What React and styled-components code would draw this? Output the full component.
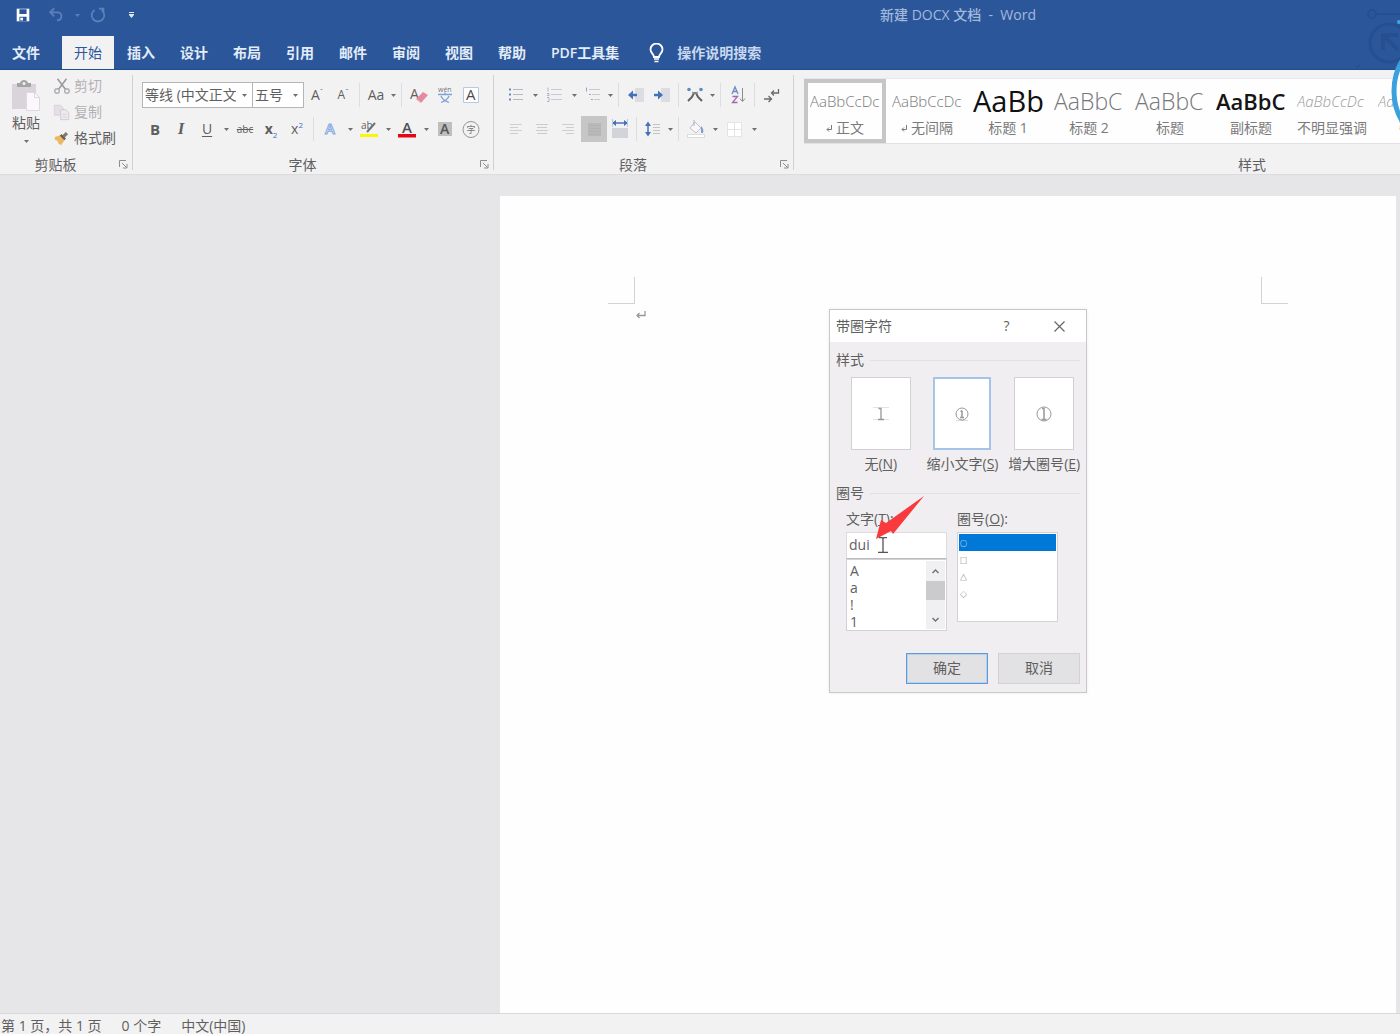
import React, { useState } from "react";
import styled, { createGlobalStyle } from "styled-components";

const wordBlue = "#2b579a";
const ribbonGrey = "#f3f2f3";
const textGrey = "#5f5f61";
const accent = "#4472b8";

const GlobalStyle = createGlobalStyle`
  * {
    box-sizing: border-box;
  }
  body {
    margin: 0;
    overflow: hidden;
    font-family: "Open Sans", "Noto Sans CJK SC", sans-serif;
    font-size: 14px;
    line-height: 20px;
    color: ${textGrey};
  }
  button, input, select {
    font: inherit;
    color: inherit;
    margin: 0;
  }
  button {
    padding: 0;
    border: 0;
    background: none;
    cursor: pointer;
  }
`;

const AppStyled = styled.div`
  position: relative;
  display: flex;
  flex-direction: column;
  min-height: 100vh;
  overflow: hidden;
  background-color: #e6e6e8;
`;

/* ---------- header ---------- */

const Header = styled.header`
  background-color: ${wordBlue};
  border-bottom: 1px solid #1d4f8f;
`;

const TitleBar = styled.div`
  display: flex;
  align-items: center;
  justify-content: space-between;
  height: 30px;
  padding: 0 26% 0 12px;
`;

const QuickAccess = styled.div`
  display: flex;
  align-items: center;
  gap: 11px;
`;

const QuickButton = styled.button`
  display: flex;
  align-items: center;
  justify-content: center;
  width: ${props => (props.$small ? "8px" : "22px")};
  height: 22px;
  margin: ${props => (props.$small ? "0 -5px" : "0")};
  color: ${props => (props.$off ? "#5c80b9" : "#ffffff")};
`;

const Title = styled.div`
  color: #a3b9dc;
  font-weight: 500;
  white-space: pre;
`;

const Tabs = styled.nav`
  display: flex;
  align-items: stretch;
  gap: 1px;
  height: 39px;
  padding-top: 6px;
`;

const Tab = styled.button`
  padding: 0 12px;
  margin-right: ${props => (props.$file ? "9px" : "0")};
  font-weight: ${props => (props.$active ? 400 : 600)};
  color: ${props => (props.$active ? wordBlue : "#e4ecf8")};
  background-color: ${props => (props.$active ? ribbonGrey : "transparent")};
  white-space: nowrap;
`;

const TellMe = styled.button`
  display: flex;
  align-items: center;
  gap: 13px;
  margin-left: 17px;
  font-weight: 600;
  color: #c9d8ee;
`;

/* ---------- ribbon ---------- */

const Ribbon = styled.section`
  display: flex;
  height: 105px;
  background-color: ${ribbonGrey};
  border-bottom: 1px solid #dcdcde;
`;

const Group = styled.div`
  position: relative;
  display: flex;
  flex-direction: column;
  flex: none;
  padding: 12px 8px 0 9px;
  min-width: ${props => props.$min || "0"};

  &:not(:last-child)::after {
    content: "";
    position: absolute;
    top: 5px;
    right: 0;
    bottom: 4px;
    width: 1px;
    background-color: #cfd1d6;
  }
`;

const GroupFooter = styled.div`
  display: flex;
  align-items: center;
  margin: auto -4px 0 -9px;
  height: 19px;
`;

const GroupName = styled.div`
  flex: 1;
  padding-right: ${props => (props.$last ? "0" : "8px")};
  text-align: center;
`;

const Launcher = styled.button`
  display: flex;
  width: 10px;
`;

const ToolRows = styled.div`
  display: flex;
  flex-direction: column;
  gap: 8px;
`;

const ToolRow = styled.div`
  display: flex;
  align-items: center;
  height: 26px;
`;

const Tool = styled.button`
  display: flex;
  align-items: center;
  justify-content: center;
  width: ${props => (props.$narrow ? "24px" : "26px")};
  height: 26px;
  background-color: ${props => (props.$on ? "#c6c6c6" : "transparent")};
`;

const CaretButton = styled.button`
  display: flex;
  align-items: center;
  justify-content: center;
  width: ${props => (props.$narrow ? "10px" : props.$wide ? "14px" : "12px")};
  height: 26px;
`;

const Separator = styled.span`
  width: 1px;
  height: 24px;
  margin: 0 4px 0 3px;
  background-color: #dcdde1;
`;

const Letter = styled.span`
  font-size: ${props => props.$size || 15}px;
  font-weight: ${props => (props.$bold ? 700 : 400)};
  font-style: ${props => (props.$italic ? "italic" : "normal")};
  font-family: ${props =>
    props.$serif ? '"Liberation Serif", serif' : "inherit"};
  text-decoration: ${props => props.$line || "none"};
  text-underline-offset: 2px;

  sub, sup {
    font-size: 8px;
    font-weight: 400;
    line-height: 0;
    color: ${accent};
  }
`;

const Combo = styled.label`
  display: flex;
  align-items: center;
  justify-content: space-between;
  gap: 6px;
  width: ${props => (props.$short ? "52px" : "111px")};
  height: 26px;
  margin-right: ${props => (props.$short ? "0" : "-1px")};
  padding: 0 5px 0 2px;
  background-color: #ffffff;
  border: 1px solid #b5b5b7;
`;

const ComboSelect = styled.select`
  appearance: none;
  flex: 1;
  min-width: 0;
  height: 24px;
  padding: 0;
  border: 0;
  background: none;
  overflow: hidden;
  text-overflow: clip;
`;

const ClipboardBody = styled.div`
  display: flex;
  gap: 7px;
  margin: -2px 0 0 -3px;
`;

const PasteButton = styled.button`
  display: flex;
  flex-direction: column;
  align-items: center;
  width: 40px;
  line-height: 22px;

  svg:last-child {
    margin-top: 6px;
  }
`;

const ClipboardList = styled.div`
  display: flex;
  flex-direction: column;
  gap: 6px;
  margin-top: -4px;
`;

const ClipboardItem = styled.button`
  display: flex;
  align-items: center;
  gap: 3px;
  height: 20px;
  color: ${props => (props.$off ? "#b3b1b5" : textGrey)};
`;

const Gallery = styled.div`
  display: flex;
  height: 66px;
  margin: -4px 0 0 1px;
  background-color: #fefefe;
  border-top: 1px solid #e4e6ee;
  border-bottom: 1px solid #e2e2e4;
`;

const StyleCard = styled.button`
  display: flex;
  flex-direction: column;
  align-items: center;
  flex: none;
  width: 82px;
  padding: ${props => (props.$active ? "1px 0 0" : "5px 4px 0")};
  border: ${props => (props.$active ? "4px solid #c6c6c6" : "0")};

  & + & {
    margin-right: -1px;
  }
`;

const Preview = styled.span`
  width: 70px;
  height: 34px;
  line-height: 34px;
  overflow: hidden;
  white-space: nowrap;
  text-align: left;
  font-size: ${props => props.$size}px;
  font-weight: ${props => props.$weight || 300};
  font-style: ${props => (props.$italic ? "italic" : "normal")};
  color: ${props => props.$color || "#77777a"};
`;

const StyleName = styled.span`
  display: flex;
  align-items: center;
  gap: 4px;
  color: #7a7a7c;
  white-space: nowrap;
`;

/* ---------- document ---------- */

const Workspace = styled.main`
  flex: 1;
  display: flex;
  justify-content: flex-end;
  padding-top: 21px;
`;

const Paper = styled.article`
  position: relative;
  width: 64%;
  margin-right: 4px;
  padding: 81px 108px 0;
  background-color: #fefefe;
`;

const Margins = styled.div`
  display: flex;
  justify-content: space-between;
`;

const Corner = styled.span`
  width: 27px;
  height: 27px;
  border-bottom: 1px solid #d4d4d6;
  border-left: ${props => (props.$right ? "1px solid #d4d4d6" : "0")};
  border-right: ${props => (props.$right ? "0" : "1px solid #d4d4d6")};
`;

const Paragraph = styled.p`
  display: flex;
  margin: 6px 0 0 27px;
`;

/* ---------- dialog ---------- */

const Dialog = styled.section`
  position: absolute;
  top: 113px;
  left: 329px;
  width: 258px;
  background-color: #f0eef0;
  border: 1px solid #c9c7ca;
  box-shadow: 0 0 3px rgba(0, 0, 0, 0.08);
`;

const DialogTitle = styled.div`
  display: flex;
  align-items: center;
  height: 32px;
  padding-left: 6px;
  background-color: #ffffff;
`;

const DialogName = styled.h1`
  flex: 1;
  margin: 0;
  font-size: 14px;
  font-weight: 400;
`;

const DialogTool = styled.button`
  display: flex;
  align-items: center;
  justify-content: center;
  width: 53px;
  height: 32px;
`;

const DialogBody = styled.div`
  padding: 8px 6px;
`;

const SectionTitle = styled.div`
  display: flex;
  align-items: center;
  gap: 6px;

  &::after {
    content: "";
    flex: 1;
    height: 1px;
    background-color: #e2e0e3;
  }
`;

const Choices = styled.div`
  display: grid;
  grid-template-columns: repeat(3, 1fr);
  margin: 7px -5px 9px 4px;
`;

const Choice = styled.label`
  display: flex;
  flex-direction: column;
  align-items: center;
  gap: 4px;
  white-space: nowrap;

  input {
    appearance: none;
    position: absolute;
    margin: 0;
  }
`;

const ChoiceBox = styled.span`
  display: flex;
  align-items: center;
  justify-content: center;
  width: ${props => (props.$on ? "58px" : "60px")};
  height: 73px;
  background-color: #ffffff;
  border: ${props => (props.$on ? "2px solid #a4c4ea" : "1px solid #d2d0d3")};
`;

const Columns = styled.div`
  display: flex;
  gap: 10px;
  padding: 6px 10px 0;
`;

const Field = styled.div`
  display: flex;
  flex-direction: column;
  width: 101px;

  & > label {
    height: 23px;
  }
`;

const TextInput = styled.input`
  width: 100%;
  height: 27px;
  padding: 0 2px 2px;
  background-color: #ffffff;
  border: 1px solid #dddbde;
  border-bottom-color: #bcbabd;
  outline: none;
`;

const ListFrame = styled.div`
  display: flex;
  height: ${props => (props.$tall ? "90px" : "72px")};
  padding: 1px;
  background-color: #ffffff;
  border: 1px solid #cfd3d8;
`;

const ListBox = styled.select`
  flex: 1;
  min-width: 0;
  height: 100%;
  padding: 0;
  border: 0;
  border-radius: 0;
  background: none;
  overflow: hidden;
  outline: none;

  option {
    height: 17px;
    min-height: 17px;
    padding: ${props => (props.$symbols ? "4px 1px 0" : "0 2px")};
    border-radius: 0;
    font-size: ${props => (props.$symbols ? "7px" : "14px")};
    font-weight: ${props => (props.$symbols ? "700" : "400")};
    line-height: 17px;
    color: ${textGrey};
  }
  option:checked {
    color: ${props => (props.$symbols ? "#ffffff" : textGrey)};
    background: ${props =>
      props.$symbols ? "linear-gradient(#0078d7, #0078d7)" : "none"};
  }
`;

const ScrollTrack = styled.div`
  display: flex;
  flex-direction: column;
  width: 19px;
  background-color: #f0eff1;
`;

const ScrollButton = styled.button`
  display: flex;
  align-items: center;
  justify-content: center;
  height: 20px;
`;

const ScrollThumb = styled.span`
  height: 19px;
  margin-bottom: auto;
  background-color: #cbcacc;
`;

const DialogFooter = styled.div`
  display: flex;
  justify-content: flex-end;
  gap: 10px;
  margin-top: 22px;
`;

const DialogButton = styled.button`
  width: 82px;
  height: 31px;
  padding-bottom: 2px;
  background-color: #e2e1e3;
  border: 1px solid ${props => (props.$primary ? "#5f9bd5" : "#d2d1d3")};
  box-shadow: ${props => (props.$primary ? "inset 0 0 0 1px #b4d2ee" : "none")};
`;

const Pointer = styled.svg`
  position: absolute;
  left: 375px;
  top: 298px;
`;

const Beam = styled.svg`
  position: absolute;
  left: 378px;
  top: 341px;
`;

/* ---------- status bar ---------- */

const StatusBar = styled.footer`
  display: flex;
  gap: 20px;
  height: 21px;
  padding: 2px 1px 0;
  background-color: ${ribbonGrey};
  border-top: 1px solid #d9d9db;
`;

const Watermark = styled.svg`
  position: absolute;
  top: 0;
  right: 0;
  pointer-events: none;
`;

/* ---------- icons ---------- */

const IconSvg = styled.svg`
  overflow: visible;
`;

function Icon({ size = 20, children }) {
  return (
    <IconSvg width={size} height={size} viewBox="0 0 20 20" fill="none" aria-hidden="true">
      {children}
    </IconSvg>
  );
}

function Caret({ color = "#707072" }) {
  return (
    <svg width="5" height="3" viewBox="0 0 5 3" aria-hidden="true">
      <path d="M0 0h5L2.5 3z" fill={color} />
    </svg>
  );
}

const lines = (rows, color = "#b5b9c4") =>
  rows.map(([x1, x2, y]) => (
    <path key={y} d={`M${x1} ${y}H${x2}`} stroke={color} />
  ));

const icons = {
  save: (
    <Icon size={18}>
      <path d="M3 3h14v14H3z" fill="#fff" />
      <path d="M6 3.500h8V9H6zM6 12h8v5H6z" fill={wordBlue} />
      <path d="M7 13h3v3H7z" fill="#fff" />
    </Icon>
  ),
  undo: (
    <Icon size={18}>
      <path d="M4 7h8c6 0 5 9-1 9M8 2.500L3.500 7l4.500 4.500" stroke="currentColor" strokeWidth="2" />
    </Icon>
  ),
  redo: (
    <Icon size={18}>
      <path d="M6 4.500a7 7 0 1 0 8 0M11 3h5v5" stroke="currentColor" strokeWidth="2" />
    </Icon>
  ),
  more: (
    <svg width="5" height="6" viewBox="0 0 5 6" aria-hidden="true">
      <path d="M0 0h5v1H0zM0 2h5v1L2.500 6 0 3z" fill="#dce8f8" />
    </svg>
  ),
  bulb: (
    <svg width="15" height="20" viewBox="0 0 15 20" fill="none" aria-hidden="true">
      <path d="M5 14c0-3-3.500-4-3.500-7.500a6 6 0 0 1 12 0C13.500 10 10 11 10 14z" stroke="#fff" strokeWidth="1.800" />
      <path d="M5 16h5M5.500 18.500h4" stroke="#fff" strokeWidth="1.600" />
    </svg>
  ),
  paste: (
    <svg width="30" height="32" viewBox="0 0 30 32" fill="none" aria-hidden="true">
      <path d="M1 4h24v25H1z" fill="#d9d4da" />
      <path d="M6 3h3c1-4 7-4 8 0h3v4H6z" fill="#a5a3a6" />
      <circle cx="13" cy="3.500" r="1.500" fill="#f3f2f3" />
      <path d="M15.500 12.500h8l5 5v13h-13z" fill="#fbf7fb" stroke="#e0d8e1" />
      <path d="M23.500 12.500v5h5" stroke="#ddd6de" />
    </svg>
  ),
  cut: (
    <Icon size={18}>
      <path d="M5 2l9 12M15 2L6 14" stroke="#9c9a9e" strokeWidth="1.800" />
      <circle cx="4.500" cy="15.500" r="2.500" stroke="#b0aeb3" strokeWidth="1.600" />
      <circle cx="15.500" cy="15.500" r="2.500" stroke="#b0aeb3" strokeWidth="1.600" />
    </Icon>
  ),
  copy: (
    <Icon size={18}>
      <path d="M1.500 2.500h7l3 3v8h-10z" fill="#e4dfe5" stroke="#d6d1d8" />
      <path d="M8.500 7.500h6l3 3v8h-9z" fill="#efeaf0" stroke="#cfc9d1" />
      <path d="M10.500 12.500h5M10.500 15.500h5" stroke="#d6d1d8" />
    </Icon>
  ),
  brush: (
    <Icon size={18}>
      <path d="M2 9l6-2 5 5-4 6-3-2-1-3-3-1z" fill="#edb95f" />
      <path d="M8.500 6.500l5 5" stroke="#6b5a50" strokeWidth="2.500" />
      <path d="M11.500 8.500L15.500 4.500" stroke="#77777c" strokeWidth="3.500" />
    </Icon>
  ),
  eraser: (
    <Icon>
      <text x="1" y="14" fontSize="14" fill="#606062">A</text>
      <path d="M7 14l7-7 5 3-7 8z" fill="#e58ba0" />
      <path d="M7 14l5 4" stroke="#f4c4cf" />
    </Icon>
  ),
  pinyin: (
    <Icon>
      <text x="3" y="7" fontSize="7" fill="#77777a">wén</text>
      <path d="M3 9.500h14M10 7.500v2M6 11c1 3 4 5 8 6.500M14 11c-1 3-4 5-8 6.500" stroke="#7ea3d6" strokeWidth="1.300" />
    </Icon>
  ),
  boxedA: (
    <Icon>
      <path d="M2.500 2.500h15v15h-15z" fill="#fff" stroke="#b9c9e4" />
      <text x="5" y="15" fontSize="15" fill="#4b4b4d">A</text>
    </Icon>
  ),
  outlineA: (
    <Icon>
      <text x="4" y="15" fontSize="15" fontWeight="600" fill="#e8f0fb" stroke="#86abdf">A</text>
    </Icon>
  ),
  highlight: (
    <Icon>
      <text x="2" y="10" fontSize="10" fill="#606062">ab</text>
      <path d="M8 13l8-9" stroke="#707072" strokeWidth="2" />
      <path d="M1 15h18v3H1z" fill="#fbf605" />
    </Icon>
  ),
  fontColor: (
    <Icon>
      <text x="5" y="14" fontSize="15" fontWeight="600" fill="#4d5058">A</text>
      <path d="M1 15h18v3.500H1z" fill="#e30613" />
    </Icon>
  ),
  shadeA: (
    <Icon>
      <path d="M3 3h14v14H3z" fill="#bfbfc0" />
      <text x="5" y="15" fontSize="14" fontWeight="600" fill="#555557">A</text>
    </Icon>
  ),
  circled: (
    <Icon>
      <circle cx="10" cy="10.500" r="8" stroke="#949496" />
      <text x="5.500" y="14" fontSize="9" fill="#77777a">字</text>
    </Icon>
  ),
  bullets: (
    <Icon>
      {lines([[7, 17, 4.5], [7, 17, 9.5], [7, 17, 14.5]])}
      <path d="M3 3.500h2v2H3zM3 8.500h2v2H3zM3 13.500h2v2H3z" fill="#7088bd" />
    </Icon>
  ),
  numbers: (
    <Icon>
      {lines([[7, 18, 4.5], [7, 18, 9.5], [7, 18, 14.5]], "#c9cad0")}
      <path d="M4 2.500v4M3 8.500h2v2H3M3 12.500h2v4H3" stroke="#aab4d2" />
    </Icon>
  ),
  levels: (
    <Icon>
      {lines([[6, 17, 4.5], [9, 17, 9.5], [11, 17, 14.5]], "#c9cad0")}
      <path d="M3.500 2.500v4M6 9.500h2M8 14.500h2" stroke="#93a1c8" />
    </Icon>
  ),
  outdent: (
    <Icon>
      <path d="M9 3h9v14H9z" fill="#dcdde3" />
      <path d="M4 10h7" stroke={accent} strokeWidth="2.500" />
      <path d="M7 5.500v9L2 10z" fill={accent} />
    </Icon>
  ),
  indent: (
    <Icon>
      <path d="M9 3h9v14H9z" fill="#dcdde3" />
      <path d="M2 10h6" stroke={accent} strokeWidth="2.500" />
      <path d="M6 5.500v9l5-4.500z" fill={accent} />
    </Icon>
  ),
  asian: (
    <Icon>
      <path d="M3 16l4-4 2-4h2l2 4 4 4" stroke="#606062" strokeWidth="2" />
      <circle cx="4" cy="4.500" r="1.800" fill="#5a8ac8" />
      <circle cx="16" cy="4.500" r="1.800" fill="#5a8ac8" />
      <path d="M7 7l6 2M13 7l-6 2" stroke="#8a8a8c" />
    </Icon>
  ),
  sort: (
    <Icon>
      <path d="M4 9l3-7 3 7M5 6.500h4" stroke="#6c8ac4" strokeWidth="1.300" />
      <path d="M4.500 11.500h5l-5 6h5" stroke="#a06ab0" strokeWidth="1.300" />
      <path d="M14.500 3v13M12 13.500l2.500 3 2.500-3" stroke="#8a8a90" />
    </Icon>
  ),
  marks: (
    <Icon>
      <path d="M17.500 4v4H11M13 5.500L10.500 8l2.500 2.500M3 14h7M7.500 11l3 3-3 3" stroke="#6a6a6c" strokeWidth="1.300" />
    </Icon>
  ),
  left: (
    <Icon>{lines([[4, 16, 5.5], [4, 12, 8.5], [4, 16, 11.5], [4, 12, 14.5]], "#cfcfd1")}</Icon>
  ),
  center: (
    <Icon>{lines([[4, 16, 5.5], [5, 15, 8.5], [4, 16, 11.5], [5, 15, 14.5]], "#cbcbcd")}</Icon>
  ),
  right: (
    <Icon>{lines([[4, 16, 5.5], [8, 16, 8.5], [4, 16, 11.5], [8, 16, 14.5]], "#cfcfd1")}</Icon>
  ),
  justify: (
    <Icon>
      <path d="M4 4h13v13H4z" fill="#b9b9ba" />
      {lines([[4, 17, 6.5], [4, 17, 9.5], [4, 17, 12.5], [4, 17, 15.5]], "#b3b3b4")}
    </Icon>
  ),
  distribute: (
    <Icon>
      <path d="M2 9h16v10H2z" fill="#d3d4d9" />
      <path d="M3 4h14" stroke={accent} strokeWidth="1.500" />
      <path d="M6 1v6L2 4zM14 1v6l4-3z" fill={accent} />
      <path d="M2.500 0v8M17.500 0v8" stroke="#b8c8e2" />
    </Icon>
  ),
  spacing: (
    <Icon>
      <path d="M5 4v12" stroke={accent} strokeWidth="1.500" />
      <path d="M2 7h6L5 2.500zM2 13h6l-3 4.500z" fill={accent} />
      {lines([[10, 17, 5.5], [10, 17, 8.5], [10, 17, 11.5], [10, 17, 14.5]], "#c4c4c8")}
    </Icon>
  ),
  fill: (
    <Icon>
      <path d="M4 9l5-6 6 6-5 5z" fill="#f8f8fa" stroke="#c0c0c4" />
      <path d="M8 1v6" stroke="#b0b0b4" />
      <path d="M15 7c2 2 3 4 2 7h-2z" fill="#7c9fd2" />
      <path d="M1.500 15.500h17v3h-17z" fill="#fff" stroke="#dcdce0" />
    </Icon>
  ),
  borders: (
    <Icon>
      <path d="M3.500 3.500h14v14h-14zM10.500 3.500v14M3.500 10.500h14" fill="#fff" stroke="#e4e4e7" />
    </Icon>
  ),
  launcher: (
    <svg width="9" height="9" viewBox="0 0 9 9" fill="none" aria-hidden="true">
      <path d="M.5 7V.5H7M3 3l4.500 4.500M8 4v4H4" stroke="#8e8e90" />
    </svg>
  ),
  enter: (
    <svg width="11" height="10" viewBox="0 0 11 10" fill="none" aria-hidden="true">
      <path d="M10 1v4.500H2M4.500 3L2 5.500 4.500 8" stroke="#98989a" strokeWidth="1.300" />
    </svg>
  ),
  smallEnter: (
    <svg width="6" height="8" viewBox="0 0 6 8" fill="none" aria-hidden="true">
      <path d="M5.500 1v4.500H1M3 3.500l-2 2 2 2" stroke="#7a7a7c" />
    </svg>
  )
};

/* ---------- data ---------- */

const tabNames = ["插入", "设计", "布局", "引用", "邮件", "审阅", "视图", "帮助", "PDF工具集"];

const styleCards = [
  { name: "正文", sample: "AaBbCcDc", size: 15, active: true, enter: true },
  { name: "无间隔", sample: "AaBbCcDc", size: 15, enter: true },
  { name: "标题 1", sample: "AaBb", size: 29, weight: 500, color: "#111111" },
  { name: "标题 2", sample: "AaBbC", size: 23 },
  { name: "标题", sample: "AaBbC", size: 23 },
  { name: "副标题", sample: "AaBbC", size: 22, weight: 600, color: "#151515" },
  { name: "不明显强调", sample: "AaBbCcDc", size: 15, italic: true, color: "#9b9b9d" },
  { name: "强调", sample: "AaBbCcDc", size: 15, italic: true, color: "#9b9b9d" }
];

const choices = [
  { name: "无", hotkey: "N" },
  { name: "缩小文字", hotkey: "S" },
  { name: "增大圈号", hotkey: "E" }
];

function ChoiceGlyph({ kind }) {
  return (
    <svg width="18" height="18" viewBox="0 0 18 18" fill="none" stroke="#98989a" aria-hidden="true">
      {kind === 0 && (
        <>
          <path d="M1 2.500h16M1 14.500h16" stroke="#e2e2e4" />
          <path d="M9 3v11M6 14.500h6M6.500 3.500H9" strokeWidth="1.300" />
        </>
      )}
      {kind === 1 && (
        <>
          <path d="M3 15.500h12" stroke="#dcdcde" />
          <circle cx="9" cy="9" r="6" />
          <path d="M9 5.500v7M7 12.500h4M7.500 6.500L9 5.500" strokeWidth="1.500" />
        </>
      )}
      {kind === 2 && (
        <>
          <circle cx="9" cy="9" r="7" />
          <path d="M9 3v12M6.500 14.500h5M7 3.500h2" strokeWidth="1.500" />
        </>
      )}
    </svg>
  );
}

function IconTool({ name, label, ...rest }) {
  return (
    <Tool aria-label={label} {...rest}>
      {icons[name]}
    </Tool>
  );
}

function DropTool({ name, label, narrow, wide, children }) {
  return (
    <>
      <Tool aria-label={label} $narrow={narrow}>
        {children || icons[name]}
      </Tool>
      <CaretButton aria-label={label + "选项"} $narrow={narrow} $wide={wide}>
        <Caret />
      </CaretButton>
    </>
  );
}

function Footer({ name }) {
  return (
    <GroupFooter>
      <GroupName>{name}</GroupName>
      <Launcher aria-label={name + "设置"}>{icons.launcher}</Launcher>
    </GroupFooter>
  );
}

function ClipboardGroup() {
  return (
    <Group $min="133px">
      <ClipboardBody>
        <PasteButton>
          {icons.paste}
          粘贴
          <Caret />
        </PasteButton>
        <ClipboardList>
          <ClipboardItem $off>{icons.cut}剪切</ClipboardItem>
          <ClipboardItem $off>{icons.copy}复制</ClipboardItem>
          <ClipboardItem>{icons.brush}格式刷</ClipboardItem>
        </ClipboardList>
      </ClipboardBody>
      <Footer name="剪贴板" />
    </Group>
  );
}

function FontGroup() {
  return (
    <Group $min="361px">
      <ToolRows>
        <ToolRow>
          <Combo>
            <ComboSelect aria-label="字体">
              <option>等线 (中文正文)</option>
            </ComboSelect>
            <Caret />
          </Combo>
          <Combo $short>
            <ComboSelect aria-label="字号">
              <option>五号</option>
            </ComboSelect>
            <Caret />
          </Combo>
          <Tool aria-label="增大字号"><Letter $size={14}>A<sup>ˆ</sup></Letter></Tool>
          <Tool aria-label="减小字号"><Letter $size={12}>A<sup>ˇ</sup></Letter></Tool>
          <Separator />
          <DropTool label="更改大小写" narrow><Letter $size={14}>Aa</Letter></DropTool>
          <Separator />
          <IconTool name="eraser" label="清除格式" />
          <IconTool name="pinyin" label="拼音指南" />
          <IconTool name="boxedA" label="字符边框" />
        </ToolRow>
        <ToolRow>
          <Tool aria-label="加粗"><Letter $bold>B</Letter></Tool>
          <Tool aria-label="倾斜"><Letter $bold $italic $serif $size={17}>I</Letter></Tool>
          <DropTool label="下划线"><Letter $line="underline" $size={14}>U</Letter></DropTool>
          <Tool aria-label="删除线"><Letter $line="line-through" $size={10}>abc</Letter></Tool>
          <Tool aria-label="下标"><Letter $bold $size={14}>x<sub>2</sub></Letter></Tool>
          <Tool aria-label="上标"><Letter $size={14}>x<sup>2</sup></Letter></Tool>
          <Separator />
          <DropTool name="outlineA" label="文本效果" />
          <DropTool name="highlight" label="突出显示" />
          <DropTool name="fontColor" label="字体颜色" />
          <IconTool name="shadeA" label="字符底纹" />
          <IconTool name="circled" label="带圈字符" />
        </ToolRow>
      </ToolRows>
      <Footer name="字体" />
    </Group>
  );
}

function ParagraphGroup() {
  return (
    <Group $min="300px">
      <ToolRows>
        <ToolRow>
          <DropTool name="bullets" label="项目符号" />
          <DropTool name="numbers" label="编号" wide />
          <DropTool name="levels" label="多级列表" narrow />
          <Separator />
          <IconTool name="outdent" label="减少缩进量" />
          <IconTool name="indent" label="增加缩进量" />
          <Separator />
          <DropTool name="asian" label="中文版式" narrow />
          <Separator />
          <IconTool name="sort" label="排序" />
          <Separator />
          <IconTool name="marks" label="显示编辑标记" $narrow />
        </ToolRow>
        <ToolRow>
          <IconTool name="left" label="左对齐" />
          <IconTool name="center" label="居中" />
          <IconTool name="right" label="右对齐" />
          <IconTool name="justify" label="两端对齐" $on />
          <IconTool name="distribute" label="分散对齐" />
          <Separator />
          <DropTool name="spacing" label="行距" narrow />
          <Separator />
          <DropTool name="fill" label="底纹" />
          <DropTool name="borders" label="边框" wide />
        </ToolRow>
      </ToolRows>
      <Footer name="段落" />
    </Group>
  );
}

function StylesGroup() {
  return (
    <Group $min="920px">
      <Gallery>
        {styleCards.map(card => (
          <StyleCard key={card.name} $active={card.active}>
            <Preview
              $size={card.size}
              $weight={card.weight}
              $italic={card.italic}
              $color={card.color}
            >
              {card.sample}
            </Preview>
            <StyleName>
              {card.enter && icons.smallEnter}
              {card.name}
            </StyleName>
          </StyleCard>
        ))}
      </Gallery>
      <GroupFooter>
        <GroupName $last>样式</GroupName>
      </GroupFooter>
    </Group>
  );
}

function EncloseDialog() {
  const [choice, setChoice] = useState(1);
  const [text, setText] = useState("dui");

  return (
    <Dialog role="dialog" aria-labelledby="dialog-name">
      <DialogTitle>
        <DialogName id="dialog-name">带圈字符</DialogName>
        <DialogTool>?</DialogTool>
        <DialogTool aria-label="关闭">
          <svg width="11" height="11" viewBox="0 0 11 11" aria-hidden="true">
            <path d="M.5.5l10 10M10.500.5l-10 10" stroke="#666668" strokeWidth="1.200" />
          </svg>
        </DialogTool>
      </DialogTitle>
      <DialogBody>
        <SectionTitle>样式</SectionTitle>
        <Choices>
          {choices.map((item, index) => (
            <Choice key={item.hotkey}>
              <input
                type="radio"
                name="enclose-style"
                checked={choice === index}
                onChange={() => setChoice(index)}
              />
              <ChoiceBox $on={choice === index}>
                <ChoiceGlyph kind={index} />
              </ChoiceBox>
              <span>
                {item.name}(<u>{item.hotkey}</u>)
              </span>
            </Choice>
          ))}
        </Choices>
        <SectionTitle>圈号</SectionTitle>
        <Columns>
          <Field>
            <label htmlFor="enclose-text">文字(<u>T</u>):</label>
            <TextInput
              id="enclose-text"
              value={text}
              onChange={e => setText(e.target.value)}
            />
            <ListFrame>
              <ListBox size={4} aria-label="文字列表">
                <option>A</option>
                <option>a</option>
                <option>!</option>
                <option>1</option>
              </ListBox>
              <ScrollTrack>
                <ScrollButton aria-label="向上">
                  <svg width="7" height="5" viewBox="0 0 7 5" fill="none"><path d="M.5 4l3-3 3 3" stroke="#707072" strokeWidth="1.400" /></svg>
                </ScrollButton>
                <ScrollThumb />
                <ScrollButton aria-label="向下">
                  <svg width="7" height="5" viewBox="0 0 7 5" fill="none"><path d="M.5 1l3 3 3-3" stroke="#707072" strokeWidth="1.400" /></svg>
                </ScrollButton>
              </ScrollTrack>
            </ListFrame>
          </Field>
          <Field>
            <label htmlFor="enclose-shape">圈号(<u>O</u>):</label>
            <ListFrame $tall>
              <ListBox id="enclose-shape" size={4} $symbols defaultValue="○">
                <option>○</option>
                <option>□</option>
                <option>△</option>
                <option>◇</option>
              </ListBox>
            </ListFrame>
          </Field>
        </Columns>
        <DialogFooter>
          <DialogButton $primary>确定</DialogButton>
          <DialogButton>取消</DialogButton>
        </DialogFooter>
      </DialogBody>
    </Dialog>
  );
}

export default function App() {
  return (
    <AppStyled>
      <GlobalStyle />
      <Header>
        <TitleBar>
          <QuickAccess>
            <QuickButton aria-label="保存">{icons.save}</QuickButton>
            <QuickButton aria-label="撤消" $off>{icons.undo}</QuickButton>
            <QuickButton aria-label="撤消选项" $small><Caret color="#5c80b9" /></QuickButton>
            <QuickButton aria-label="恢复" $off>{icons.redo}</QuickButton>
            <QuickButton aria-label="自定义快速访问工具栏">{icons.more}</QuickButton>
          </QuickAccess>
          <Title>新建 DOCX 文档  -  Word</Title>
        </TitleBar>
        <Tabs>
          <Tab $file>文件</Tab>
          <Tab $active>开始</Tab>
          {tabNames.map(name => (
            <Tab key={name}>{name}</Tab>
          ))}
          <TellMe>
            {icons.bulb}
            操作说明搜索
          </TellMe>
        </Tabs>
      </Header>
      <Ribbon>
        <ClipboardGroup />
        <FontGroup />
        <ParagraphGroup />
        <StylesGroup />
      </Ribbon>
      <Workspace>
        <Paper>
          <Margins>
            <Corner />
            <Corner $right />
          </Margins>
          <Paragraph>{icons.enter}</Paragraph>
          <EncloseDialog />
          <Pointer width="52" height="46" viewBox="0 0 52 46" aria-hidden="true">
            <path d="M49 2L18 40l-2-3L1 45l5-19 5 3z" fill="#f83a3c" />
          </Pointer>
          <Beam width="10" height="16" viewBox="0 0 10 16" fill="none" aria-hidden="true">
            <path d="M1 .5h3l1 1 1-1h3M5 1v14M0 15.500h10" stroke="#555557" strokeWidth="1.300" />
          </Beam>
        </Paper>
      </Workspace>
      <StatusBar>
        <span>第 1 页，共 1 页</span>
        <span>0 个字</span>
        <span>中文(中国)</span>
      </StatusBar>
      <Watermark width="48" height="130" viewBox="0 0 48 130" fill="none" aria-hidden="true">
        <g stroke="#264f90" strokeWidth="2">
          <circle cx="20" cy="14" r="4" />
          <path d="M24 14h24M4 68l4-3" />
          <circle cx="37" cy="43" r="19" strokeWidth="3" />
          <path d="M31 50V35h15M32 36l14 14" strokeWidth="4" />
        </g>
        <circle cx="101" cy="91" r="59" fill="#fff" stroke="#3aa0de" strokeWidth="5" />
        <circle cx="47" cy="22" r="2" fill="#3aa5e6" />
      </Watermark>
    </AppStyled>
  );
}
